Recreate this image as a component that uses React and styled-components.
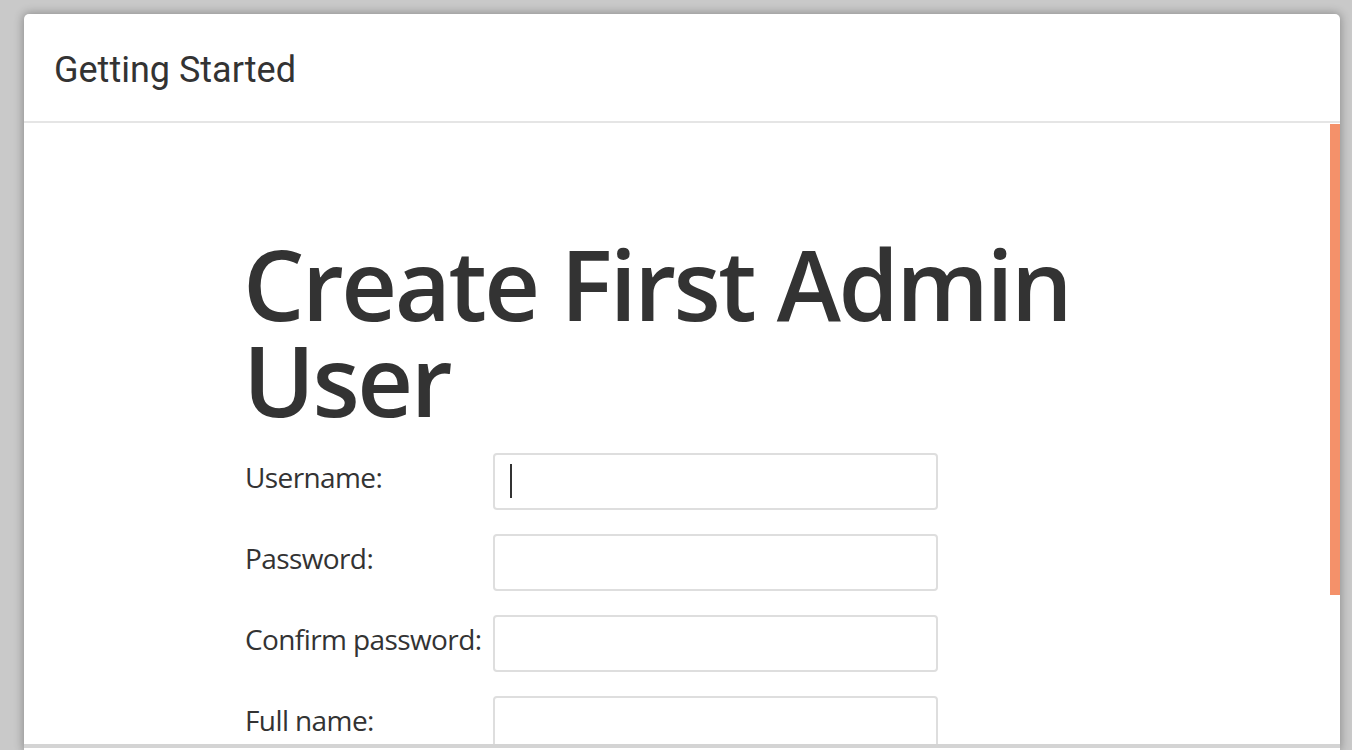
import React from 'react';
import styled, { createGlobalStyle } from 'styled-components';

const Global = createGlobalStyle`
  html, body {
    margin: 0;
    padding: 0;
    height: 100%;
    overflow: hidden;
    background: #c9c9c9;
  }
  #root {
    height: 100%;
  }
`;

const Page = styled.div`
  height: 100vh;
  box-sizing: border-box;
  padding: 14px 12px 0 24px;
  background: #c9c9c9;
`;

const Modal = styled.div`
  height: 100%;
  background: #fff;
  border-radius: 5px 5px 0 0;
  box-shadow: 0 0 10px 1px rgba(0, 0, 0, 0.3);
  display: flex;
  flex-direction: column;
  overflow: hidden;
`;

const Header = styled.div`
  height: 109px;
  flex: none;
  box-sizing: border-box;
  padding: 0 30px;
  display: flex;
  align-items: center;
  border-bottom: 2px solid #e5e5e5;
`;

const Title = styled.h4`
  margin: 0;
  font-family: Roboto, "Liberation Sans", sans-serif;
  font-weight: 400;
  font-size: 36px;
  line-height: 40px;
  color: #333;
  padding-top: 5px;
`;

const Body = styled.div`
  position: relative;
  height: 621px;
  flex: none;
  overflow: hidden;
`;

const Thumb = styled.div`
  position: absolute;
  top: 1px;
  right: 0;
  width: 10px;
  height: 471px;
  background: #f4916a;
`;

const Content = styled.div`
  padding: 112px 0 90px 219px;
  width: 880px;
`;

const Heading = styled.h1`
  margin: 0 0 26px;
  font-family: "Open Sans", "Noto Sans", sans-serif;
  font-weight: 600;
  font-size: 97px;
  line-height: 96px;
  letter-spacing: -2.5px;
  color: #333;
`;

const Row = styled.div`
  display: flex;
  align-items: flex-start;
  margin-bottom: 24px;
`;

const Label = styled.label`
  width: 250px;
  flex: none;
  padding: 8px 0 0 2px;
  box-sizing: border-box;
  font-family: "Open Sans", "Noto Sans", sans-serif;
  font-size: 28px;
  line-height: 1.2;
  letter-spacing: -0.6px;
  white-space: nowrap;
  color: #333;
`;

const Field = styled.div`
  position: relative;
  width: 445px;
  height: 57px;
`;

const Input = styled.input`
  width: 100%;
  height: 100%;
  box-sizing: border-box;
  border: 2px solid #dedede;
  border-radius: 4px;
  padding: 0 16px;
  font-size: 26px;
  font-family: "Open Sans", sans-serif;
  outline: none;
  background: #fff;
`;

const Caret = styled.span`
  position: absolute;
  left: 17px;
  top: 11px;
  width: 2px;
  height: 34px;
  background: #333;
`;

const Footer = styled.div`
  flex: 1;
  border-top: 4px solid #d4d4d4;
`;

const fields = [
  { id: 'username', label: 'Username:', type: 'text' },
  { id: 'password1', label: 'Password:', type: 'password' },
  { id: 'password2', label: 'Confirm password:', type: 'password' },
  { id: 'fullname', label: 'Full name:', type: 'text' },
  { id: 'email', label: 'E-mail address:', type: 'text' },
];

export default function App() {
  return (
    <Page>
      <Global />
      <Modal>
        <Header>
          <Title>Getting Started</Title>
        </Header>
        <Body>
          <Content>
            <Heading>Create First Admin User</Heading>
            {fields.map((f, i) => (
              <Row key={f.id}>
                <Label htmlFor={f.id}>{f.label}</Label>
                <Field>
                  <Input id={f.id} name={f.id} type={f.type} />
                  {i === 0 && <Caret />}
                </Field>
              </Row>
            ))}
          </Content>
          <Thumb />
        </Body>
        <Footer />
      </Modal>
    </Page>
  );
}
